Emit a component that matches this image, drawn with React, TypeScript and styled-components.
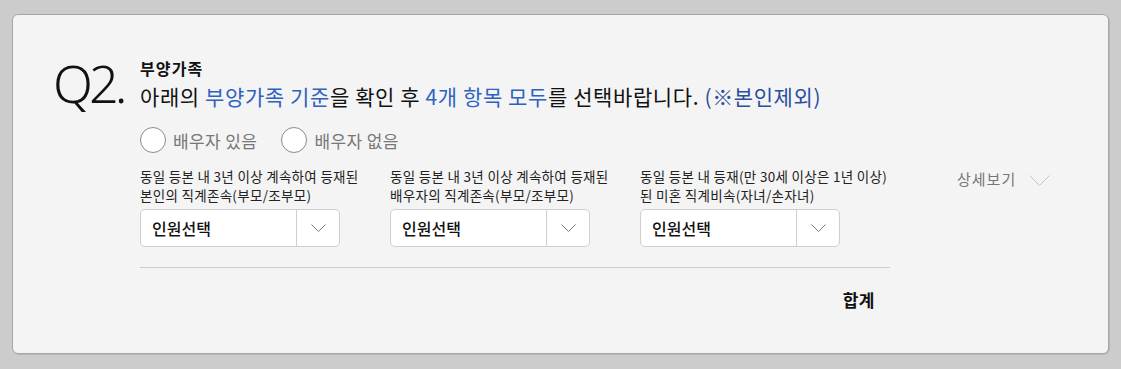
import React from "react";
import styled, { createGlobalStyle } from "styled-components";

const Global = createGlobalStyle`
  html, body { margin: 0; padding: 0; background: #cccccc; }
  body { font-family: "Noto Sans CJK KR", "Noto Sans", sans-serif; color: #111; }
`;

const Page = styled.div`
  padding: 14px 12px 15px 12px;
`;

const Card = styled.section`
  box-sizing: border-box;
  height: 340px;
  background: #f4f4f4;
  border: 1px solid #a6a6a6;
  border-radius: 6px;
  box-shadow: 1px 1px 0 #b8b8b8;
  display: flex;
  padding: 38px 0 0 40px;
`;

const QNum = styled.div`
  width: 87px;
  flex: none;
  font-family: "Noto Sans", sans-serif;
  font-weight: 300;
  font-size: 52px;
  line-height: 1;
  letter-spacing: -4px;
  color: #111;
  padding-top: 4px;
`;

const Body = styled.div`
  display: flex;
  flex-direction: column;
`;

const Title = styled.div`
  font-size: 16px;
  font-weight: 700;
  line-height: 20px;
  letter-spacing: 1.1px;
  margin-top: 5px;
`;

const Question = styled.div`
  font-size: 21px;
  line-height: 28px;
  margin-top: 4px;
  color: #111;
  letter-spacing: 0.6px;
  white-space: nowrap;
`;

const Em = styled.span<{ $tone?: "dark" }>`
  color: ${(p) => (p.$tone === "dark" ? "#2a4fa0" : "#2f62bf")};
`;

const RadioRow = styled.div`
  display: flex;
  gap: 24px;
  margin-top: 17px;
`;

const RadioItem = styled.label`
  display: flex;
  align-items: center;
  gap: 7px;
  font-size: 17px;
  letter-spacing: 0.4px;
  color: #777;
  cursor: pointer;
`;

const Circle = styled.span`
  box-sizing: border-box;
  width: 26px;
  height: 26px;
  border-radius: 50%;
  border: 1px solid #8a8a8a;
  background: #fff;
`;

const Fields = styled.div`
  display: grid;
  grid-template-columns: 250px 250px 250px auto;
  margin-top: 14px;
`;

const Field = styled.div`
  display: flex;
  flex-direction: column;
`;

const FieldLabel = styled.div`
  font-size: 13.5px;
  line-height: 19px;
  color: #222;
  letter-spacing: 0.3px;
  height: 38px;
  white-space: nowrap;
`;

const Select = styled.div`
  box-sizing: border-box;
  margin-top: 4px;
  width: 200px;
  height: 38px;
  background: #fff;
  border: 1px solid #cfcfcf;
  border-radius: 5px;
  display: flex;
`;

const SelectText = styled.div`
  flex: 1;
  display: flex;
  align-items: center;
  padding-left: 11px;
  font-size: 16px;
  font-weight: 500;
  color: #111;
`;

const SelectArrow = styled.div`
  width: 42px;
  border-left: 1px solid #cfcfcf;
  display: flex;
  align-items: center;
  justify-content: center;
`;

const Detail = styled.div`
  margin-left: 67px;
  display: flex;
  align-items: flex-start;
  gap: 13px;
  font-size: 15px;
  line-height: 24px;
  letter-spacing: 1px;
  color: #777;
  white-space: nowrap;
`;

const DetailIcon = styled.span`
  padding-top: 8px;
  display: flex;
`;

const Divider = styled.hr`
  width: 750px;
  margin: 20px 0 0 0;
  border: none;
  border-top: 1px solid #cccccc;
`;

const Total = styled.div`
  width: 750px;
  box-sizing: border-box;
  padding-right: 15px;
  margin-top: 20px;
  text-align: right;
  font-size: 17px;
  line-height: 24px;
  letter-spacing: 0.5px;
  font-weight: 700;
  color: #111;
`;

const Chevron = ({ w, h, color }: { w: number; h: number; color: string }) => (
  <svg width={w} height={h} viewBox={`0 0 ${w} ${h}`} fill="none">
    <polyline points={`0.5,0.5 ${w / 2},${h - 0.5} ${w - 0.5},0.5`} stroke={color} strokeWidth="1" />
  </svg>
);

const fields = [
  ["동일 등본 내 3년 이상 계속하여 등재된", "본인의 직계존속(부모/조부모)"],
  ["동일 등본 내 3년 이상 계속하여 등재된", "배우자의 직계존속(부모/조부모)"],
  ["동일 등본 내 등재(만 30세 이상은 1년 이상)", "된 미혼 직계비속(자녀/손자녀)"],
];

export default function App() {
  return (
    <>
      <Global />
      <Page>
        <Card>
          <QNum>Q2.</QNum>
          <Body>
            <Title>부양가족</Title>
            <Question>
              아래의 <Em>부양가족 기준</Em>을 확인 후 <Em>4개 항목 모두</Em>를 선택바랍니다.{" "}
              <Em $tone="dark">(※본인제외)</Em>
            </Question>
            <RadioRow>
              <RadioItem>
                <Circle />
                배우자 있음
              </RadioItem>
              <RadioItem>
                <Circle />
                배우자 없음
              </RadioItem>
            </RadioRow>
            <Fields>
              {fields.map((f, i) => (
                <Field key={i}>
                  <FieldLabel>
                    {f[0]}
                    <br />
                    {f[1]}
                  </FieldLabel>
                  <Select>
                    <SelectText>인원선택</SelectText>
                    <SelectArrow>
                      <Chevron w={15} h={8} color="#7a7a7a" />
                    </SelectArrow>
                  </Select>
                </Field>
              ))}
              <Detail>
                상세보기
                <DetailIcon>
                  <Chevron w={21} h={11} color="#c4c4c4" />
                </DetailIcon>
              </Detail>
            </Fields>
            <Divider />
            <Total>합계</Total>
          </Body>
        </Card>
      </Page>
    </>
  );
}
